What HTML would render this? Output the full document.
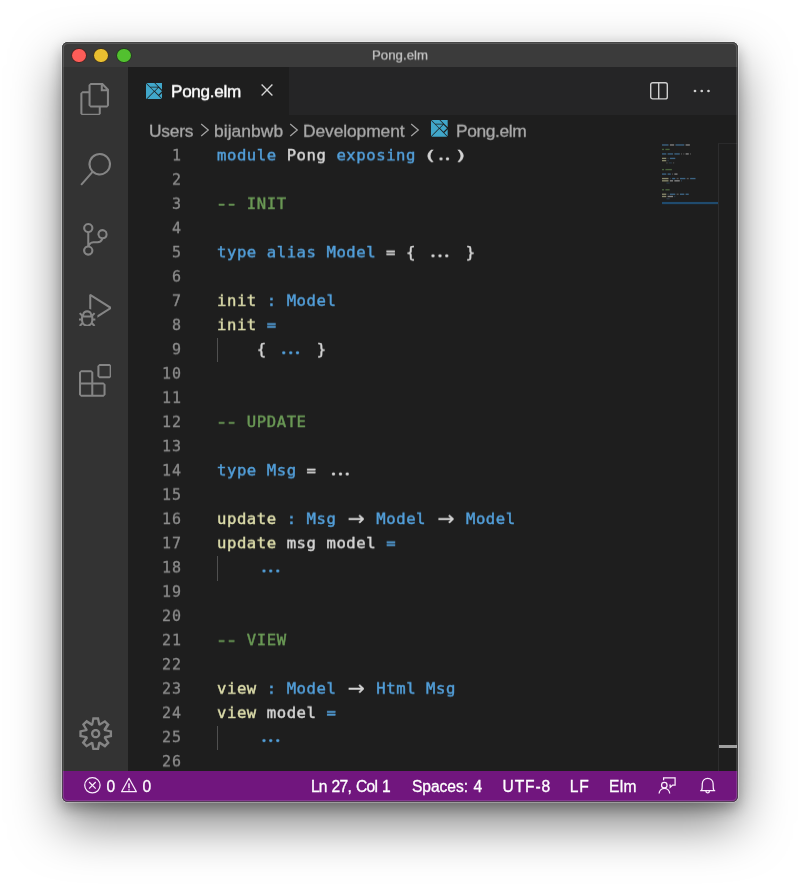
<!DOCTYPE html>
<html lang="en">
<head>
<meta charset="utf-8">
<title>Pong.elm</title>
<style>
*{box-sizing:border-box;margin:0;padding:0}
html,body{width:800px;height:885px;background:#fff;overflow:hidden}
body{position:relative;font-family:"Liberation Sans",sans-serif;-webkit-font-smoothing:antialiased}
.abs{position:absolute}
#shadow{position:absolute;left:62px;top:42px;width:676px;height:760px;border-radius:6px;
  box-shadow:0 0 0 1px rgba(255,255,255,.3),0 22px 50px 0 rgba(0,0,0,.5),0 6px 14px 0 rgba(0,0,0,.3)}
#win{will-change:transform;position:absolute;left:62px;top:42px;width:676px;height:760px;border-radius:6px;overflow:hidden;background:#1e1e1e}
#rim{position:absolute;left:62px;top:42px;width:676px;height:760px;border-radius:6px;box-shadow:inset 0 0 0 .8px rgba(62,62,62,.9),inset 0 0 0 2px rgba(255,255,255,.15);pointer-events:none}
#title{left:0;top:0;width:676px;height:25px;background:#3b3b3b}
#title .t{-webkit-text-stroke:.25px #c3c3c3;position:absolute;left:0;width:676px;top:5px;will-change:transform;transform:translateY(.5px) rotate(.003deg);letter-spacing:.06px;text-align:center;font-size:13.2px;line-height:16px;color:#c3c3c3}
.tl{position:absolute;top:6.7px;width:13.6px;height:13.6px;border-radius:50%}
#act{left:0;top:25px;width:66px;height:704px;background:#333333}
.ai{position:absolute;left:16.5px;width:32.7px;height:32.7px;fill:#858585}
#tabs{left:66px;top:25px;width:610px;height:47.7px;background:#252526}
#tab{left:0;top:0;width:161px;height:47.7px;background:#1e1e1e}
#tab .n{-webkit-text-stroke:.4px #fff;position:absolute;left:43.2px;top:15px;font-size:17.1px;line-height:20px;color:#ffffff;letter-spacing:-.27px;will-change:transform;transform:translateY(.2px) rotate(.003deg);white-space:nowrap}
#crumbs{left:66px;top:72.7px;width:610px;height:30px;background:#1e1e1e;color:#a9a9a9;font-size:17.4px;line-height:20px;white-space:nowrap}
#crumbs span{-webkit-text-stroke:.3px #a9a9a9;position:absolute;top:5px;will-change:transform;transform:translateY(.8px) rotate(.003deg);letter-spacing:-.4px}
#ed{left:66px;top:102px;width:610px;height:627.5px;background:#1e1e1e}
.ln{position:absolute;left:0;width:54px;text-align:right;color:#8b8b8b}
.code,.ln{will-change:transform;transform-origin:0 17px;font-family:"DejaVu Sans Mono","Liberation Mono",monospace;font-size:15.6px;letter-spacing:.56px;line-height:24.24px;height:24.24px;white-space:pre}
.code{position:absolute;left:88.6px;color:#d4d4d4;-webkit-text-stroke:.45px}
.ln{-webkit-text-stroke:.3px;font-size:15px;letter-spacing:.95px;left:0}
.b{color:#529fda}.y{color:#dcdcaa}.g{color:#6a9955}.w{color:#d4d4d4}
.lig3{display:inline-block;width:30px;text-align:center;font-family:"Liberation Serif",serif;font-size:28px;line-height:1px;letter-spacing:-.1px;text-indent:-2.1px;-webkit-text-stroke:0}
.lig2{display:inline-block;width:20px;text-align:center;font-family:"Liberation Serif",serif;font-size:28px;line-height:1px;letter-spacing:-.4px;text-indent:-3.6px;-webkit-text-stroke:0}
.ar{display:inline-block;width:20px;height:24.24px;text-align:center;letter-spacing:0;font-family:"DejaVu Sans",sans-serif;font-size:20.5px;line-height:24.24px;vertical-align:top;position:relative;top:-1.3px;-webkit-text-stroke:.2px}
.pl,.pr{display:inline-block;position:relative;top:1.3px;transform:scale(1.5,.87)}
.pl{transform-origin:78% 52%;left:.8px}.pr{transform-origin:22% 52%;left:-.8px}
.dd{display:inline-block;transform:scaleX(1.3)}
.guide{position:absolute;left:89px;width:1px;height:24.24px;background:#505050}
#ruler{left:590.3px;top:-1.5px;width:20px;height:628px;border-left:1px solid #2d2d2e;border-top:1px solid #2a2a2b}
#cur{left:591.3px;top:601.4px;width:18px;height:2.2px;background:#a0a0a0}
#status{left:0;top:728.8px;width:676px;height:31.2px;background:#71167e;color:#fff;font-size:15.6px;line-height:20px;white-space:nowrap;word-spacing:1.2px}
.si{fill:none;stroke:#fbeefd;stroke-width:1.25}
#status span{-webkit-text-stroke:.3px #fff;position:absolute;top:5.9px;letter-spacing:-.3px}
</style>
</head>
<body>
<div id="shadow"></div>
<div id="win">
  <div id="title" class="abs">
    <div class="tl" style="left:10.4px;background:#fd5d58;box-shadow:0 0 0 .7px rgba(90,10,5,.55)"></div>
    <div class="tl" style="left:32.2px;background:#e9bf30;box-shadow:0 0 0 .7px rgba(70,45,0,.6)"></div>
    <div class="tl" style="left:55px;background:#52c02f;box-shadow:0 0 0 .7px rgba(10,60,0,.6)"></div>
    <div class="t">Pong.elm</div>
  </div>
  <div id="act" class="abs">
<svg class="ai" style="top:15.75px" viewBox="0 0 24 24"><path d="M17.5 0h-9L7 1.5V6H2.5L1 7.5v15.07L2.5 24h12.07L16 22.57V18h4.7l1.3-1.43V4.5L17.5 0zm0 2.12l2.38 2.38H17.5V2.12zm-3 20.38h-12v-15H7v9.07L8.5 18h6v4.5zm6-6h-12v-15H16V6h4.5v10.5z"/></svg>
<svg class="ai" style="top:86.05px" viewBox="0 0 24 24"><path d="M15.25 0a8.25 8.25 0 0 0-6.18 13.72L1 22.88l1.12 1 8.05-9.12A8.251 8.251 0 1 0 15.25.01V0zm0 15a6.75 6.75 0 1 1 0-13.5 6.75 6.75 0 0 1 0 13.5z"/></svg>
<svg class="ai" style="top:156.35px" viewBox="0 0 24 24"><path d="M21.007 8.222A3.738 3.738 0 0 0 15.045 5.2a3.737 3.737 0 0 0 1.156 6.583 2.988 2.988 0 0 1-2.668 1.67h-2.99a4.456 4.456 0 0 0-2.989 1.165V7.4a3.737 3.737 0 1 0-1.494 0v9.117a3.776 3.776 0 1 0 1.816.099 2.99 2.99 0 0 1 2.668-1.667h2.99a4.484 4.484 0 0 0 4.223-3.039 3.736 3.736 0 0 0 3.25-3.687zM4.565 3.738a2.242 2.242 0 1 1 4.484 0 2.242 2.242 0 0 1-4.484 0zm4.484 16.441a2.242 2.242 0 1 1-4.484 0 2.242 2.242 0 0 1 4.484 0zm8.221-9.715a2.242 2.242 0 1 1 0-4.485 2.242 2.242 0 0 1 0 4.485z"/></svg>
<svg class="ai" style="top:226.65px" viewBox="0 0 24 24"><path d="M10.94 13.5l-1.32 1.32a3.73 3.73 0 0 0-7.24 0L1.06 13.5 0 14.56l1.72 1.72-.22.22V18H0v1.5h1.5v.08c.077.489.214.966.41 1.42L0 22.94 1.06 24l1.65-1.65A4.308 4.308 0 0 0 6 24a4.31 4.31 0 0 0 3.29-1.65L10.94 24 12 22.94 10.09 21c.198-.464.336-.951.41-1.45v-.1H12V18h-1.5v-1.5l-.22-.22L12 14.56l-1.06-1.06zM6 13.5a2.25 2.25 0 0 1 2.25 2.25h-4.5A2.25 2.25 0 0 1 6 13.5zm3 6a3.33 3.33 0 0 1-3 3 3.33 3.33 0 0 1-3-3v-2.250h6v2.250zm14.760-9.900v1.260L13.500 17.370V15.600l8.500-5.370L9 2v9.460a5.070 5.070 0 0 0-1.500-.720V.630L8.640 0l15.120 9.600z"/></svg>
<svg class="ai" style="top:296.95px" viewBox="0 0 24 24"><path d="M13.5 1.5L15 0h7.5L24 1.5V9l-1.5 1.5H15L13.5 9V1.5zm1.5 0V9h7.5V1.500H15zM0 15V6l1.500-1.500H9L10.500 6v7.500H18l1.500 1.500v7.500L18 24H1.500L0 22.500V15zm9-1.500V6H1.500v7.500H9zM9 15H1.500v7.500H9V15zm1.500 7.500H18V15h-7.500v7.500z"/></svg>
<svg class="ai" style="top:648.4px;left:14.63px;width:37.4px;height:37.4px" viewBox="0 0 16 16"><path d="M9.1 4.4L8.6 2H7.4l-.5 2.4-.7.3-2-1.3-.9.8 1.3 2-.2.7-2.4.5v1.2l2.4.5.3.8-1.3 2 .8.8 2-1.3.8.3.4 2.300h1.200l.500-2.400.800-.300 2 1.300.800-.800-1.300-2 .300-.800 2.300-.400V7.400l-2.400-.500-.300-.800 1.300-2-.800-.800-2 1.300-.700-.200zM9.400 1l.500 2.400L12 2.100l2 2-1.400 2.100 2.400.400v2.800l-2.400.500L14 12l-2 2-2.100-1.400-.500 2.400H6.600l-.500-2.400L4 13.900l-2-2 1.400-2.100L1 9.400V6.600l2.400-.500L2.100 4l2-2 2.100 1.400.400-2.400h2.800zm.600 7c0 1.100-.900 2-2 2s-2-.900-2-2 .900-2 2-2 2 .900 2 2zM8 9c.600 0 1-.400 1-1s-.400-1-1-1-1 .400-1 1 .400 1 1 1z"/></svg>
</div>
  <div id="tabs" class="abs">
    <div id="tab" class="abs"><svg class="abs" style="left:17.8px;top:15.8px;width:16.7px;height:16.7px" viewBox="0 0 16 16" fill="#41a7ca"><polygon points="0.00,0.48 7.52,8.00 0.00,15.52"/><polygon points="0.48,16.00 8.00,8.48 15.52,16.00"/><polygon points="0.48,0.00 8.00,0.00 11.52,3.52 4.00,3.52"/><polygon points="4.64,4.24 11.36,4.24 8.00,7.60"/><polygon points="8.96,0.00 16.00,0.00 16.00,7.04"/><polygon points="12.00,4.64 15.36,8.00 12.00,11.36 8.64,8.00"/><polygon points="16.00,8.96 16.00,15.52 12.72,12.24"/></svg><div class="n">Pong.elm</div><svg class="abs" style="left:131.8px;top:15.9px;width:14px;height:14px" viewBox="0 0 14 14" fill="none" stroke="#d4d4d4" stroke-width="1.35"><path d="M1.6 1.6L12.4 12.4M12.4 1.6L1.6 12.4"/></svg></div>
<svg class="abs" style="left:521.3px;top:13.9px;width:20px;height:20px" viewBox="0 0 20 20" fill="none" stroke="#cfcfcf" stroke-width="1.4"><rect x="1.7" y="1.7" width="16.6" height="16.2" rx="2"/><path d="M9.7 1.7V17.9"/></svg>
<svg class="abs" style="left:564.3px;top:21.25px;width:20px;height:6px" viewBox="0 0 20 6" fill="#cfcfcf"><circle cx="3" cy="3" r="1.35"/><circle cx="9.75" cy="3" r="1.35"/><circle cx="16.5" cy="3" r="1.35"/></svg>
  </div>
  <div id="crumbs" class="abs">
    <svg class="abs" style="left:71.60px;top:8.80px;width:10px;height:14px" viewBox="0 0 10 14" fill="none" stroke="#a3a3a3" stroke-width="1.25"><path d="M1.2 1L8.3 7L1.2 13"/></svg><svg class="abs" style="left:161.00px;top:8.80px;width:10px;height:14px" viewBox="0 0 10 14" fill="none" stroke="#a3a3a3" stroke-width="1.25"><path d="M1.2 1L8.3 7L1.2 13"/></svg><svg class="abs" style="left:282.20px;top:8.80px;width:10px;height:14px" viewBox="0 0 10 14" fill="none" stroke="#a3a3a3" stroke-width="1.25"><path d="M1.2 1L8.3 7L1.2 13"/></svg><svg class="abs" style="left:303px;top:5.6px;width:16.7px;height:16.7px" viewBox="0 0 16 16" fill="#41a7ca"><polygon points="0.00,0.48 7.52,8.00 0.00,15.52"/><polygon points="0.48,16.00 8.00,8.48 15.52,16.00"/><polygon points="0.48,0.00 8.00,0.00 11.52,3.52 4.00,3.52"/><polygon points="4.64,4.24 11.36,4.24 8.00,7.60"/><polygon points="8.96,0.00 16.00,0.00 16.00,7.04"/><polygon points="12.00,4.64 15.36,8.00 12.00,11.36 8.64,8.00"/><polygon points="16.00,8.96 16.00,15.52 12.72,12.24"/></svg>
    <span style="left:21.4px;letter-spacing:-.25px">Users</span>
    <span style="left:86px;letter-spacing:.07px">bijanbwb</span>
    <span style="left:175.3px;letter-spacing:-.09px">Development</span>
    <span style="left:327.7px">Pong.elm</span>
  </div>
  <div id="ed" class="abs">
<!--LINES-->
<div class="ln" style="top:-1px;transform:translateY(0.40px) rotate(.004deg) scaleY(.95)">1</div>
<div class="code" style="top:-1px;transform:translateY(0.40px) rotate(.004deg) scaleY(.95)"><span class="b">module</span> Pong <span class="b">exposing</span> <span class="pl">(</span><span class="lig2">..</span><span class="pr">)</span></div>
<div class="ln" style="top:23px;transform:translateY(0.64px) rotate(.004deg) scaleY(.95)">2</div>
<div class="ln" style="top:47px;transform:translateY(0.88px) rotate(.004deg) scaleY(.95)">3</div>
<div class="code" style="top:47px;transform:translateY(0.88px) rotate(.004deg) scaleY(.95)"><span class="g"><span class="dd">-</span><span class="dd">-</span> INIT</span></div>
<div class="ln" style="top:72px;transform:translateY(0.12px) rotate(.004deg) scaleY(.95)">4</div>
<div class="ln" style="top:96px;transform:translateY(0.36px) rotate(.004deg) scaleY(.95)">5</div>
<div class="code" style="top:96px;transform:translateY(0.36px) rotate(.004deg) scaleY(.95)"><span class="b">type alias Model</span> = { <span class="lig3">...</span> }</div>
<div class="ln" style="top:120px;transform:translateY(0.60px) rotate(.004deg) scaleY(.95)">6</div>
<div class="ln" style="top:144px;transform:translateY(0.84px) rotate(.004deg) scaleY(.95)">7</div>
<div class="code" style="top:144px;transform:translateY(0.84px) rotate(.004deg) scaleY(.95)"><span class="y">init</span> <span class="b">: Model</span></div>
<div class="ln" style="top:169px;transform:translateY(0.08px) rotate(.004deg) scaleY(.95)">8</div>
<div class="code" style="top:169px;transform:translateY(0.08px) rotate(.004deg) scaleY(.95)"><span class="y">init</span> <span class="b">=</span></div>
<div class="ln" style="top:193px;transform:translateY(0.32px) rotate(.004deg) scaleY(.95)">9</div>
<div class="guide" style="top:194.12px"></div>
<div class="code" style="top:193px;transform:translateY(0.32px) rotate(.004deg) scaleY(.95)">    { <span class="lig3 b">...</span> }</div>
<div class="ln" style="top:217px;transform:translateY(0.56px) rotate(.004deg) scaleY(.95)">10</div>
<div class="ln" style="top:241px;transform:translateY(0.80px) rotate(.004deg) scaleY(.95)">11</div>
<div class="ln" style="top:266px;transform:translateY(0.04px) rotate(.004deg) scaleY(.95)">12</div>
<div class="code" style="top:266px;transform:translateY(0.04px) rotate(.004deg) scaleY(.95)"><span class="g"><span class="dd">-</span><span class="dd">-</span> UPDATE</span></div>
<div class="ln" style="top:290px;transform:translateY(0.28px) rotate(.004deg) scaleY(.95)">13</div>
<div class="ln" style="top:314px;transform:translateY(0.52px) rotate(.004deg) scaleY(.95)">14</div>
<div class="code" style="top:314px;transform:translateY(0.52px) rotate(.004deg) scaleY(.95)"><span class="b">type Msg</span> = <span class="lig3">...</span></div>
<div class="ln" style="top:338px;transform:translateY(0.76px) rotate(.004deg) scaleY(.95)">15</div>
<div class="ln" style="top:363px;transform:translateY(0.00px) rotate(.004deg) scaleY(.95)">16</div>
<div class="code" style="top:363px;transform:translateY(0.00px) rotate(.004deg) scaleY(.95)"><span class="y">update</span> <span class="b">: Msg</span> <span class="ar">→</span> <span class="b">Model</span> <span class="ar">→</span> <span class="b">Model</span></div>
<div class="ln" style="top:387px;transform:translateY(0.24px) rotate(.004deg) scaleY(.95)">17</div>
<div class="code" style="top:387px;transform:translateY(0.24px) rotate(.004deg) scaleY(.95)"><span class="y">update</span> msg model <span class="b">=</span></div>
<div class="ln" style="top:411px;transform:translateY(0.48px) rotate(.004deg) scaleY(.95)">18</div>
<div class="guide" style="top:412.28px"></div>
<div class="code" style="top:411px;transform:translateY(0.48px) rotate(.004deg) scaleY(.95)">    <span class="lig3 b">...</span></div>
<div class="ln" style="top:435px;transform:translateY(0.72px) rotate(.004deg) scaleY(.95)">19</div>
<div class="ln" style="top:459px;transform:translateY(0.96px) rotate(.004deg) scaleY(.95)">20</div>
<div class="ln" style="top:484px;transform:translateY(0.20px) rotate(.004deg) scaleY(.95)">21</div>
<div class="code" style="top:484px;transform:translateY(0.20px) rotate(.004deg) scaleY(.95)"><span class="g"><span class="dd">-</span><span class="dd">-</span> VIEW</span></div>
<div class="ln" style="top:508px;transform:translateY(0.44px) rotate(.004deg) scaleY(.95)">22</div>
<div class="ln" style="top:532px;transform:translateY(0.68px) rotate(.004deg) scaleY(.95)">23</div>
<div class="code" style="top:532px;transform:translateY(0.68px) rotate(.004deg) scaleY(.95)"><span class="y">view</span> <span class="b">: Model</span> <span class="ar">→</span> <span class="b">Html Msg</span></div>
<div class="ln" style="top:556px;transform:translateY(0.92px) rotate(.004deg) scaleY(.95)">24</div>
<div class="code" style="top:556px;transform:translateY(0.92px) rotate(.004deg) scaleY(.95)"><span class="y">view</span> model <span class="b">=</span></div>
<div class="ln" style="top:581px;transform:translateY(0.16px) rotate(.004deg) scaleY(.95)">25</div>
<div class="guide" style="top:581.96px"></div>
<div class="code" style="top:581px;transform:translateY(0.16px) rotate(.004deg) scaleY(.95)">    <span class="lig3 b">...</span></div>
<div class="ln" style="top:605px;transform:translateY(0.40px) rotate(.004deg) scaleY(.95)">26</div>
<!--/LINES-->
<!--MINI--><svg id="mini" class="abs" style="left:533.8px;top:0;width:57px;height:64px" viewBox="0 0 57 64"><rect x="0.00" y="0.30" width="6.50" height="1.35" fill="#569cd6" opacity="0.55"/><rect x="7.88" y="0.30" width="4.25" height="1.35" fill="#d4d4d4" opacity="0.55"/><rect x="13.50" y="0.30" width="8.75" height="1.35" fill="#569cd6" opacity="0.55"/><rect x="23.62" y="0.30" width="4.25" height="1.35" fill="#d4d4d4" opacity="0.55"/><rect x="0.00" y="4.78" width="2.00" height="1.35" fill="#6a9955" opacity="0.55"/><rect x="3.38" y="4.78" width="4.25" height="1.35" fill="#6a9955" opacity="0.55"/><rect x="0.00" y="9.26" width="4.25" height="1.35" fill="#569cd6" opacity="0.55"/><rect x="5.62" y="9.26" width="5.38" height="1.35" fill="#569cd6" opacity="0.55"/><rect x="12.38" y="9.26" width="5.38" height="1.35" fill="#569cd6" opacity="0.55"/><rect x="19.12" y="9.26" width="0.88" height="1.35" fill="#d4d4d4" opacity="0.3"/><rect x="21.38" y="9.26" width="0.88" height="1.35" fill="#d4d4d4" opacity="0.3"/><rect x="23.62" y="9.26" width="3.12" height="1.35" fill="#d4d4d4" opacity="0.55"/><rect x="28.12" y="9.26" width="0.88" height="1.35" fill="#d4d4d4" opacity="0.3"/><rect x="0.00" y="13.74" width="4.25" height="1.35" fill="#dcdcaa" opacity="0.55"/><rect x="5.62" y="13.74" width="0.88" height="1.35" fill="#569cd6" opacity="0.3"/><rect x="7.88" y="13.74" width="5.38" height="1.35" fill="#569cd6" opacity="0.55"/><rect x="0.00" y="15.98" width="4.25" height="1.35" fill="#dcdcaa" opacity="0.55"/><rect x="5.62" y="15.98" width="0.88" height="1.35" fill="#569cd6" opacity="0.3"/><rect x="4.50" y="18.22" width="0.88" height="1.35" fill="#d4d4d4" opacity="0.3"/><rect x="6.75" y="18.22" width="3.12" height="1.35" fill="#569cd6" opacity="0.2"/><rect x="11.25" y="18.22" width="0.88" height="1.35" fill="#d4d4d4" opacity="0.3"/><rect x="0.00" y="24.94" width="2.00" height="1.35" fill="#6a9955" opacity="0.55"/><rect x="3.38" y="24.94" width="6.50" height="1.35" fill="#6a9955" opacity="0.55"/><rect x="0.00" y="29.42" width="4.25" height="1.35" fill="#569cd6" opacity="0.55"/><rect x="5.62" y="29.42" width="3.12" height="1.35" fill="#569cd6" opacity="0.55"/><rect x="10.12" y="29.42" width="0.88" height="1.35" fill="#d4d4d4" opacity="0.3"/><rect x="12.38" y="29.42" width="3.12" height="1.35" fill="#d4d4d4" opacity="0.55"/><rect x="0.00" y="33.90" width="6.50" height="1.35" fill="#dcdcaa" opacity="0.55"/><rect x="7.88" y="33.90" width="0.88" height="1.35" fill="#569cd6" opacity="0.3"/><rect x="10.12" y="33.90" width="3.12" height="1.35" fill="#569cd6" opacity="0.55"/><rect x="14.62" y="33.90" width="2.00" height="1.35" fill="#d4d4d4" opacity="0.3"/><rect x="18.00" y="33.90" width="5.38" height="1.35" fill="#569cd6" opacity="0.55"/><rect x="24.75" y="33.90" width="2.00" height="1.35" fill="#d4d4d4" opacity="0.3"/><rect x="28.12" y="33.90" width="5.38" height="1.35" fill="#569cd6" opacity="0.55"/><rect x="0.00" y="36.14" width="6.50" height="1.35" fill="#dcdcaa" opacity="0.55"/><rect x="7.88" y="36.14" width="3.12" height="1.35" fill="#d4d4d4" opacity="0.55"/><rect x="12.38" y="36.14" width="5.38" height="1.35" fill="#d4d4d4" opacity="0.55"/><rect x="19.12" y="36.14" width="0.88" height="1.35" fill="#569cd6" opacity="0.3"/><rect x="4.50" y="38.38" width="3.12" height="1.35" fill="#569cd6" opacity="0.2"/><rect x="0.00" y="45.10" width="2.00" height="1.35" fill="#6a9955" opacity="0.55"/><rect x="3.38" y="45.10" width="4.25" height="1.35" fill="#6a9955" opacity="0.55"/><rect x="0.00" y="49.58" width="4.25" height="1.35" fill="#dcdcaa" opacity="0.55"/><rect x="5.62" y="49.58" width="0.88" height="1.35" fill="#569cd6" opacity="0.3"/><rect x="7.88" y="49.58" width="5.38" height="1.35" fill="#569cd6" opacity="0.55"/><rect x="14.62" y="49.58" width="2.00" height="1.35" fill="#d4d4d4" opacity="0.3"/><rect x="18.00" y="49.58" width="4.25" height="1.35" fill="#569cd6" opacity="0.55"/><rect x="23.62" y="49.58" width="3.12" height="1.35" fill="#569cd6" opacity="0.55"/><rect x="0.00" y="51.82" width="4.25" height="1.35" fill="#dcdcaa" opacity="0.55"/><rect x="5.62" y="51.82" width="5.38" height="1.35" fill="#d4d4d4" opacity="0.55"/><rect x="12.38" y="51.82" width="0.88" height="1.35" fill="#569cd6" opacity="0.3"/><rect x="4.50" y="54.06" width="3.12" height="1.35" fill="#569cd6" opacity="0.2"/><rect x="0" y="57.95" width="56.2" height="2.2" fill="#204b6e"/></svg><!--/MINI-->
<div id="ruler" class="abs"></div><div id="cur" class="abs"></div>
</div>
  <div id="status" class="abs">
    <svg class="abs si" style="left:21.20px;top:5.60px;width:18.8px;height:18.8px" viewBox="0 0 18.8 18.8"><circle cx="9.4" cy="9.3" r="7.7"/><path d="M6.1 6L12.7 12.6M12.7 6L6.1 12.6"/></svg>
    <svg class="abs si" style="left:58.00px;top:5.50px;width:18px;height:18px" viewBox="0 0 18 18"><path d="M9 2.3L16.4 15.7H1.6Z" stroke-linejoin="round"/><path d="M9 7.3V12.2M9 13.2V14.6" stroke-width="1.5"/></svg>
    <svg class="abs si" style="left:595.00px;top:5.20px;width:20px;height:19px" viewBox="0 0 20 19"><path d="M6.6 4.2V1.9H18.1V9.1H15.6L13.2 11.4V9.1H12.3"/><circle cx="7.3" cy="9.2" r="2.75"/><path d="M2.1 17.6A5.3 5.3 0 0 1 12.7 17.6"/></svg>
    <svg class="abs si" style="left:637.00px;top:5.20px;width:18px;height:20px" viewBox="0 0 18 20"><path d="M1.2 14.7H16.2M2.5 14.700C3.600 12.500 3.100 10 3.300 7.700A5.400 5.400 0 0 1 14.100 7.700C14.300 10 13.800 12.500 14.900 14.700M7 15.200A1.700 1.700 0 0 0 10.400 15.200" stroke-linejoin="round"/></svg>
    <span style="left:44.5px">0</span>
    <span style="left:80.5px">0</span>
    <span style="left:248.9px;letter-spacing:-.72px">Ln 27, Col 1</span>
    <span style="left:350px;letter-spacing:-.05px">Spaces: 4</span>
    <span style="left:440.6px;letter-spacing:.85px">UTF-8</span>
    <span style="left:507.8px;letter-spacing:.8px">LF</span>
    <span style="left:546.9px;letter-spacing:.4px">Elm</span>
  </div>
</div>
<div id="rim"></div>
</body>
</html>
